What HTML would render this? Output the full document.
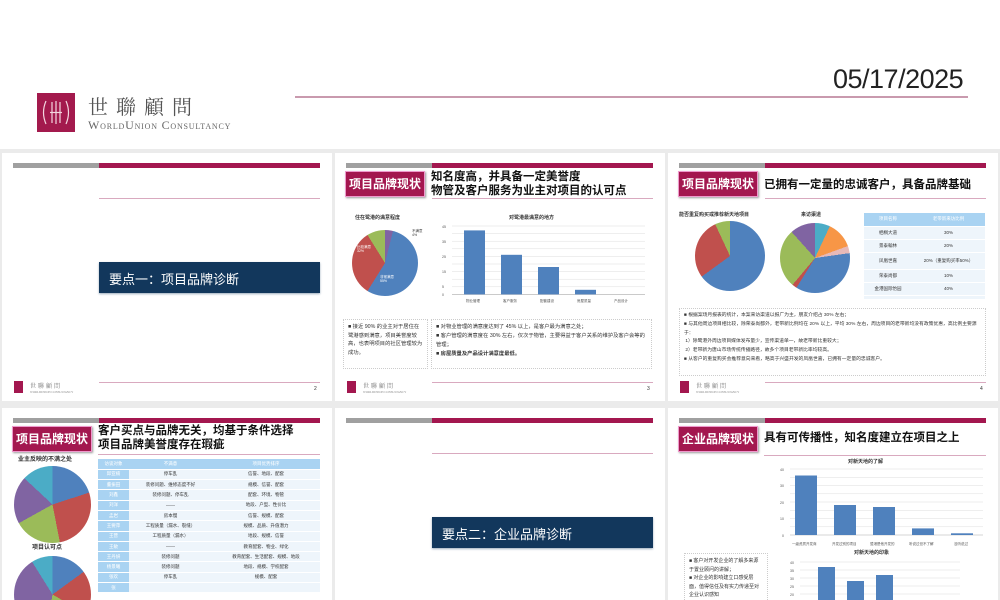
<!DOCTYPE html>
<html><head><meta charset="utf-8">
<style>
*{margin:0;padding:0;box-sizing:border-box}
html,body{width:1000px;height:600px;overflow:hidden}
body{background:#fff;font-family:"Liberation Sans","Noto Sans CJK SC",sans-serif;position:relative}
.a{position:absolute}
.bg{position:absolute;left:0;top:149px;width:1000px;height:451px;background:#ebebeb}
.s{position:absolute;width:330px;height:248px;background:#fff;overflow:hidden}
.s.b{height:192px}
.gb{position:absolute;left:11px;top:10px;width:86px;height:5px;background:#a0a0a0}
.mb{position:absolute;left:97px;top:10px;width:221px;height:5px;background:#a3174f}
.pl{position:absolute;left:97px;top:45px;width:221px;height:1px;background:#d9a9bf}
.fl{position:absolute;left:97px;top:229px;width:221px;height:1px;background:#d9a9bf}
.flogo{position:absolute;left:12px;top:228px;width:9px;height:12px;background:#a3174f}
.ftx{position:absolute;left:28px;top:228px;font:6px "Liberation Serif","Noto Serif CJK SC",serif;color:#777;letter-spacing:2px}
.ftx2{position:absolute;left:28px;top:237px;font:3px "Liberation Serif",serif;color:#888}
.pn{position:absolute;left:312px;top:233px;font:5px "Liberation Sans",sans-serif;color:#333}
.nv{position:absolute;left:97px;top:109px;width:221px;height:31px;background:#12375c;color:#fff;font:13px "Liberation Sans","Noto Sans CJK SC",sans-serif;padding:7px 10px;box-shadow:0 1px 2px #9ab}
.lb{position:absolute;left:10px;top:18px;width:80px;height:26px;background:#a3174f;color:#fff;font:bold 12px "Liberation Sans","Noto Sans CJK SC",sans-serif;text-align:center;line-height:25px;box-shadow:1px 1px 2px #999;border:1px solid #e9c}
.tt{position:absolute;left:96px;top:17px;font:bold 11.5px/14px "Liberation Sans","Noto Sans CJK SC",sans-serif;color:#111}
.sm{font:5px/9px "Liberation Sans","Noto Sans CJK SC",sans-serif;color:#333}
.pie{position:absolute;border-radius:50%}
.box{position:absolute;border:1px dotted #ccc;padding:3px 4px;overflow:hidden}
.tbl td{height:10.3px;font:4.5px "Liberation Sans","Noto Sans CJK SC",sans-serif;text-align:center;color:#333;border-bottom:1px solid #fff}
</style></head><body>

<div class="a" style="left:833px;top:64px;font:27px 'Liberation Sans',sans-serif;color:#222;letter-spacing:-0.5px">05/17/2025</div>
<div class="a" style="left:295px;top:96px;width:673px;height:2px;background:#c99aae"></div>
<div class="a" style="left:37px;top:93px;width:38px;height:39px;background:#a31a4d"></div>
<svg class="a" style="left:37px;top:93px" width="38" height="39" viewBox="0 0 38 39"><g fill="none" stroke="#f3d6df" stroke-width="1.2"><path d="M9 8 Q4 19.5 9 31"/><path d="M29 8 Q34 19.5 29 31"/><path d="M15 9 V30 M19 8 V31 M23 9 V30"/><path d="M13 19.5 H25"/></g></svg>
<div class="a" style="left:88px;top:91px;font:20px 'Noto Serif CJK SC',serif;color:#555;letter-spacing:8px">世聯顧問</div>
<div class="a" style="left:88px;top:118px;font:12px 'Liberation Serif',serif;color:#666;font-variant:small-caps;letter-spacing:0.8px">WorldUnion Consultancy</div>

<div class="bg"></div>

<!-- slide 1 -->
<div class="s" style="left:2px;top:153px">
<div class="gb"></div><div class="mb"></div><div class="pl"></div>
<div class="nv">要点一：项目品牌诊断</div>
<div class="fl"></div><div class="flogo"></div><div class="ftx">世聯顧問</div><div class="ftx2">WORLDUNION CONSULTANCY</div><div class="pn">2</div>
</div>

<!-- slide 2 -->
<div class="s" style="left:335px;top:153px">
<div class="gb"></div><div class="mb"></div><div class="pl"></div>
<div class="lb">项目品牌现状</div>
<div class="tt">知名度高，并具备一定美誉度<br>物管及客户服务为业主对项目的认可点</div>
<div class="a sm" style="left:20px;top:61px;font-weight:bold">住在鹭港的满意程度</div>
<div class="pie" style="left:17px;top:77px;width:66px;height:66px;background:conic-gradient(#8064a2 0 14deg,#4f81bd 14deg 212deg,#c0504d 212deg 328deg,#9bbb59 328deg)"></div>
<div class="a sm" style="left:22px;top:92px;font-size:3.5px;line-height:4px;color:#fff">比较满意<br>32%</div>
<div class="a sm" style="left:45px;top:122px;font-size:3.5px;line-height:4px;color:#fff">非常满意<br>55%</div>
<div class="a sm" style="left:77px;top:76px;font-size:3.5px;line-height:4px">不满意<br>4%</div>
<div class="a sm" style="left:174px;top:61px;font-weight:bold">对鹭港最满意的地方</div>
<svg class="a" style="left:105px;top:70px" width="210" height="85"><g stroke="#ddd" stroke-width=".5"><path d="M12 3H205M12 10.6H205M12 18.2H205M12 25.8H205M12 33.4H205M12 41H205M12 48.6H205M12 56.2H205M12 63.8H205"/></g><path d="M12 71.4H205" stroke="#aaa" stroke-width=".6"/><g fill="#4f81bd"><rect x="24" y="7.4" width="21" height="64"/><rect x="61" y="31.8" width="21" height="39.6"/><rect x="98" y="44" width="21" height="27.4"/><rect x="135" y="66.8" width="21" height="4.6"/></g><g font-size="3.5" fill="#555" font-family="Liberation Sans,Noto Sans CJK SC"><text x="2" y="5">45</text><text x="2" y="20">35</text><text x="2" y="35">25</text><text x="2" y="50">15</text><text x="2" y="65">5</text><text x="2" y="73">0</text><text x="26" y="79">物业管理</text><text x="63" y="79">客户服务</text><text x="100" y="79">配套建设</text><text x="137" y="79">房屋质量</text><text x="174" y="79">产品设计</text></g></svg>
<div class="box sm" style="left:8px;top:166px;width:85px;height:50px;font-size:5.3px;line-height:8.5px">■ 接近 90% 的业主对于居住在鹭港感到满意，项目美誉度较高，也表明项目的社区管理较为成功。</div>
<div class="box sm" style="left:96px;top:166px;width:221px;height:50px;font-size:5.3px;line-height:9px">■ 对物业管理的满意度达到了 45% 以上，是客户最为满意之处；<br>■ 客户管理的满意度在 30% 左右，仅次于物管，主要得益于客户关系的维护及客户会等的管理；<br><b>■ 房屋质量及产品设计满意度最低。</b></div>
<div class="fl"></div><div class="flogo"></div><div class="ftx">世聯顧問</div><div class="ftx2">WORLDUNION CONSULTANCY</div><div class="pn">3</div>
</div>

<!-- slide 3 -->
<div class="s" style="left:668px;top:153px">
<div class="gb"></div><div class="mb"></div><div class="pl"></div>
<div class="lb">项目品牌现状</div>
<div class="tt" style="top:25px">已拥有一定量的忠诚客户，具备品牌基础</div>
<div class="a sm" style="left:11px;top:58px;font-weight:bold">能否重复购买或推荐新天地项目</div>
<div class="a sm" style="left:133px;top:58px;font-weight:bold">来访渠道</div>
<div class="pie" style="left:27px;top:68px;width:70px;height:70px;background:conic-gradient(#4f81bd 0 234deg,#c0504d 234deg 335deg,#9bbb59 335deg)"></div>
<div class="pie" style="left:112px;top:70px;width:70px;height:70px;background:conic-gradient(#4bacc6 0 25deg,#f79646 25deg 70deg,#e6b9b8 70deg 82deg,#4f81bd 82deg 212deg,#c0504d 212deg 220deg,#9bbb59 220deg 318deg,#8064a2 318deg)"></div>
<div class="a" style="left:196px;top:60px;width:121px;height:86px;background:#eef5fb"></div>
<table class="a tbl" style="left:196px;top:60px;width:121px;border-collapse:collapse">
<tr style="background:#a9d3f2"><td style="color:#fff;width:48px;height:13px">项目名称</td><td style="color:#fff;height:13px">老带新来访比例</td></tr>
<tr><td style="height:13px">栖桐大道</td><td>30%</td></tr><tr><td style="height:13px">景泰翰林</td><td>20%</td></tr><tr><td style="height:17px">凤凰世嘉</td><td>20%（重复购买率50%）</td></tr><tr><td style="height:13px">荣泰尚都</td><td>10%</td></tr><tr><td style="height:13px">金港国际怡园</td><td>40%</td></tr></table>
<div class="box sm" style="left:11px;top:155px;width:307px;height:68px;font-size:4.8px;line-height:8.8px">■ 根据案场月报表的统计，本案来访渠道以报广为主，朋友介绍占 30% 左右；<br>■ 与其他周边项目相比较，除荣泰尚都外，老带新比例均在 20% 以上，平均 30% 左右，周边项目的老带新均没有政策优惠，高比例主要源于：<br>&nbsp;1）除鹭港外周边项目媒体发布量少，宣传渠道单一，故老带新比重较大；<br>&nbsp;2）老带新为唐山市场传统传播路径，故多个项目老带新比率均较高。<br>■ 从客户的重复购买会推荐意向来看，略高于兴盛开发的凤凰世嘉，已拥有一定量的忠诚客户。</div>
<div class="fl"></div><div class="flogo"></div><div class="ftx">世聯顧問</div><div class="ftx2">WORLDUNION CONSULTANCY</div><div class="pn">4</div>
</div>

<!-- slide 4 -->
<div class="s b" style="left:2px;top:408px">
<div class="gb"></div><div class="mb"></div>
<div class="lb">项目品牌现状</div>
<div class="tt" style="top:16px">客户买点与品牌无关，均基于条件选择<br>项目品牌美誉度存在瑕疵</div>
<div class="a" style="left:96px;top:46px;width:222px;height:1px;background:#d9a9bf"></div>
<div class="a sm" style="left:16px;top:48px;font-weight:bold;font-size:6px">业主反映的不满之处</div>
<div class="pie" style="left:12px;top:58px;width:77px;height:77px;background:conic-gradient(#4f81bd 0 72deg,#c0504d 72deg 169deg,#9bbb59 169deg 241deg,#8064a2 241deg 313deg,#4bacc6 313deg)"></div>
<div class="a sm" style="left:30px;top:136px;font-weight:bold;font-size:6px">项目认可点</div>
<div class="a" style="left:12px;top:148px;width:77px;height:44px;overflow:hidden"><div style="width:77px;height:77px;border-radius:50%;background:conic-gradient(#4f81bd 0 54deg,#c0504d 54deg 120deg,#9bbb59 120deg 190deg,#8064a2 190deg 328deg,#4bacc6 328deg)"></div></div>
<div class="a" style="left:96px;top:51px;width:222px;height:141px;overflow:hidden">
<table class="tbl" style="width:222px;border-collapse:collapse;background:#eef5fb">
<tr style="background:#a9d3f2;color:#fff"><td style="width:31px;color:#fff">访谈对象</td><td style="width:83px;color:#fff">不满意</td><td style="color:#fff">项目优势排序</td></tr>
<tr><td style="background:#a9d3f2;color:#fff">邱亚楠</td><td>停车乱</td><td>信誉、地段、配套</td></tr>
<tr><td style="background:#a9d3f2;color:#fff">董振田</td><td>装修问题、维修态度不好</td><td>规模、信誉、配套</td></tr>
<tr><td style="background:#a9d3f2;color:#fff">刘鑫</td><td>装修问题、停车乱</td><td>配套、环境、物管</td></tr>
<tr><td style="background:#a9d3f2;color:#fff">刘洋</td><td>——</td><td>地段、户型、性价比</td></tr>
<tr><td style="background:#a9d3f2;color:#fff">孟岩</td><td>房本慢</td><td>信誉、规模、配套</td></tr>
<tr><td style="background:#a9d3f2;color:#fff">王要萍</td><td>工程质量（漏水、裂缝）</td><td>规模、品质、升值潜力</td></tr>
<tr><td style="background:#a9d3f2;color:#fff">王营</td><td>工程质量（漏水）</td><td>地段、规模、信誉</td></tr>
<tr><td style="background:#a9d3f2;color:#fff">王敏</td><td>——</td><td>教育配套、物业、绿化</td></tr>
<tr><td style="background:#a9d3f2;color:#fff">王丹妍</td><td>装修问题</td><td>教育配套、生活配套、规模、地段</td></tr>
<tr><td style="background:#a9d3f2;color:#fff">杨景曦</td><td>装修问题</td><td>地段、规模、学校配套</td></tr>
<tr><td style="background:#a9d3f2;color:#fff">张欢</td><td>停车乱</td><td>规模、配套</td></tr>
<tr><td style="background:#a9d3f2;color:#fff">张</td><td></td><td></td></tr>
</table></div>
</div>

<!-- slide 5 -->
<div class="s b" style="left:335px;top:408px">
<div class="gb"></div><div class="mb"></div><div class="pl"></div>
<div class="nv">要点二：企业品牌诊断</div>
</div>

<!-- slide 6 -->
<div class="s b" style="left:668px;top:408px">
<div class="gb"></div><div class="mb"></div>
<div class="lb">企业品牌现状</div>
<div class="tt" style="top:23px">具有可传播性，知名度建立在项目之上</div>
<div class="a" style="left:96px;top:47px;width:222px;height:1px;background:#d9a9bf"></div>
<div class="a sm" style="left:180px;top:50px;font-weight:bold;font-size:5px">对新天地的了解</div>
<svg class="a" style="left:100px;top:57px" width="220" height="85"><g stroke="#ddd" stroke-width=".5"><path d="M22 4H215M22 12.3H215M22 20.5H215M22 28.8H215M22 37H215M22 45.3H215M22 53.5H215M22 61.8H215"/></g><path d="M22 70H215" stroke="#aaa" stroke-width=".6"/><g fill="#4f81bd"><rect x="27" y="10.5" width="22" height="59.5"/><rect x="66" y="40" width="22" height="30"/><rect x="105" y="42" width="22" height="28"/><rect x="144" y="63.4" width="22" height="6.6"/><rect x="183" y="68.3" width="22" height="1.7"/></g><g font-size="3.5" fill="#555" font-family="Liberation Sans,Noto Sans CJK SC"><text x="12" y="6">40</text><text x="12" y="22">30</text><text x="12" y="39">20</text><text x="12" y="55">10</text><text x="14" y="72">0</text><text x="24" y="80">一级资质开发商</text><text x="64" y="80">开发过别的项目</text><text x="102" y="80">鹭港是他开发的</text><text x="141" y="80">听说过但不了解</text><text x="186" y="80">没听说过</text></g></svg>
<div class="a sm" style="left:186px;top:141px;font-weight:bold;font-size:5px">对新天地的印象</div>
<svg class="a" style="left:120px;top:150px" width="180" height="42"><g stroke="#ddd" stroke-width=".5"><path d="M12 4H172M12 12H172M12 20H172M12 28H172M12 36H172"/></g><g fill="#4f81bd"><rect x="30" y="9" width="17" height="33"/><rect x="59" y="23" width="17" height="19"/><rect x="88" y="17" width="17" height="25"/></g><g font-size="3.5" fill="#555"><text x="2" y="6">40</text><text x="2" y="14">35</text><text x="2" y="22">30</text><text x="2" y="30">25</text><text x="2" y="38">20</text></g></svg>
<div class="box sm" style="left:16px;top:145px;width:84px;height:47px;font-size:5px;line-height:8.5px;border-bottom:none">■ 客户对开发企业的了解多来源于置业顾问的讲解；<br>■ 对企业的影响建立口感受层面，值得信任及有实力传递至对企业认识感知</div>
</div>

</body></html>
